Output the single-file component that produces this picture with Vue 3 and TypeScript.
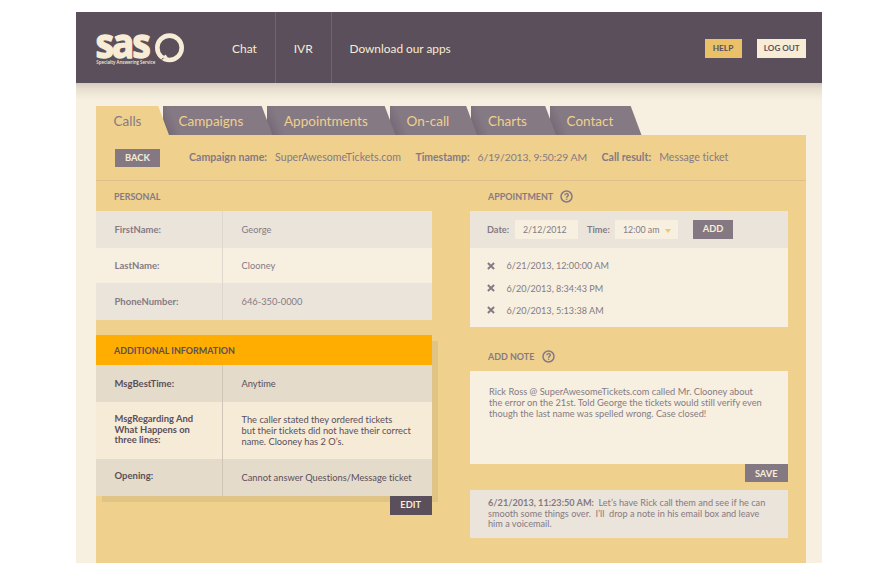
<script setup lang="ts">
interface Field {
  label: string
  value: string
}

const navItems = ['Chat', 'IVR', 'Download our apps']

const tabs = [
  { name: 'Calls', key: 'calls' },
  { name: 'Campaigns', key: 'campaigns' },
  { name: 'Appointments', key: 'appointments' },
  { name: 'On-call', key: 'oncall' },
  { name: 'Charts', key: 'charts' },
  { name: 'Contact', key: 'contact' },
]

const personal: Field[] = [
  { label: 'FirstName:', value: 'George' },
  { label: 'LastName:', value: 'Clooney' },
  { label: 'PhoneNumber:', value: '646-350-0000' },
]

const additional: Field[] = [
  { label: 'MsgBestTime:', value: 'Anytime' },
  {
    label: 'MsgRegarding And\nWhat Happens on\nthree lines:',
    value:
      'The caller stated they ordered tickets\nbut their tickets did not have their correct\nname. Clooney has 2 O’s.',
  },
  { label: 'Opening:', value: 'Cannot answer Questions/Message ticket' },
]

const appointments = ['6/21/2013, 12:00:00 AM', '6/20/2013, 8:34:43 PM', '6/20/2013, 5:13:38 AM']

const draft =
  'Rick Ross @ SuperAwesomeTickets.com called Mr. Clooney about\nthe error on the 21st. Told George the tickets would still verify even\nthough the last name was spelled wrong. Case closed!'

const savedNote =
  'Let’s have Rick call them and see if he can\nsmooth some things over.  I’ll  drop a note in his email box and leave\nhim a voicemail.'
</script>

<template>
  <div class="page">
    <header class="header">
      <svg class="logo" width="92" height="36" viewBox="0 0 92 36">
        <g transform="translate(-0.5 27) scale(0.87 0.97)">
          <text class="logo-word" x="0" y="0">sas</text>
        </g>
        <text class="logo-tag" x="0.3" y="33" textLength="59" lengthAdjust="spacingAndGlyphs">Specialty Answering Service</text>
        <circle cx="73.5" cy="16.8" r="12.2" />
        <path class="logo-cut" d="M64.4 30.4 L67 27 L69.4 26.6" />
        <path class="logo-tail" d="M66.8 26 L69.6 23.6 L71.8 26.6 L68.4 27.4 Z" />
      </svg>
      <nav class="nav">
        <a v-for="item in navItems" :key="item" class="nav-item">{{ item }}</a>
      </nav>
      <div class="actions">
        <button class="top-btn help">HELP</button>
        <button class="top-btn logout">LOG OUT</button>
      </div>
    </header>

    <main class="main">
      <div class="tabs">
        <a v-for="tab in tabs" :key="tab.key" class="tab" :class="tab.key">{{ tab.name }}</a>
      </div>

      <section class="panel">
        <div class="summary">
          <button class="btn back">BACK</button>
          <span class="meta campaign"><b>Campaign name:</b><span>SuperAwesomeTickets.com</span></span>
          <span class="meta stamp"><b>Timestamp:</b><span>6/19/2013, 9:50:29 AM</span></span>
          <span class="meta result"><b>Call result:</b><span>Message ticket</span></span>
        </div>

        <div class="columns">
          <div class="left">
            <h2 class="title">PERSONAL</h2>
            <dl class="table">
              <div v-for="f in personal" :key="f.label" class="row">
                <dt>{{ f.label }}</dt>
                <dd>{{ f.value }}</dd>
              </div>
            </dl>

            <div class="extra">
              <h2 class="title extra-title">ADDITIONAL INFORMATION</h2>
              <dl class="table">
                <div v-for="f in additional" :key="f.label" class="row">
                  <dt>{{ f.label }}</dt>
                  <dd>{{ f.value }}</dd>
                </div>
              </dl>
            </div>
            <button class="btn edit">EDIT</button>
          </div>

          <div class="right">
            <h2 class="title">
              APPOINTMENT
              <svg class="help-icon" width="13" height="13" viewBox="0 0 13 13">
                <circle cx="6.5" cy="6.5" r="5.5" />
                <path d="M4.8 5.3 C4.8 3.1 8.3 3.1 8.3 5.1 C8.3 6.3 6.6 6.3 6.6 7.7" />
                <path d="M6.6 8.6 V9.8" />
              </svg>
            </h2>
            <div class="card">
              <div class="form">
                <label class="date-label">Date:</label>
                <span class="input">2/12/2012</span>
                <label class="time-label">Time:</label>
                <span class="input">12:00 am<i class="caret"></i></span>
                <button class="btn add">ADD</button>
              </div>
              <ul class="list">
                <li v-for="a in appointments" :key="a">
                  <svg width="8" height="8" viewBox="0 0 8 8"><path d="M0.9 1.1 L7.1 6.9 M7.1 1.1 L0.9 6.9" /></svg>
                  {{ a }}
                </li>
              </ul>
            </div>

            <h2 class="title note-title">
              ADD NOTE
              <svg class="help-icon" width="13" height="13" viewBox="0 0 13 13">
                <circle cx="6.5" cy="6.5" r="5.5" />
                <path d="M4.8 5.3 C4.8 3.1 8.3 3.1 8.3 5.1 C8.3 6.3 6.6 6.3 6.6 7.7" />
                <path d="M6.6 8.6 V9.8" />
              </svg>
            </h2>
            <div class="draft">{{ draft }}</div>
            <button class="btn save">SAVE</button>
            <p class="saved"><b>6/21/2013, 11:23:50 AM:</b>{{ savedNote }}</p>
          </div>
        </div>
      </section>
    </main>
  </div>
</template>

<style>
body {
  background: #fff;
}
</style>

<style scoped>
.page {
  box-sizing: border-box;
  width: 746px;
  height: 551px;
  margin: 12px 0 0 76px;
  overflow: hidden;
  background: #f7f0e0;
  color: #857a84;
  font-family: Lato, sans-serif;
  font-variant-ligatures: none;
  display: flex;
  flex-direction: column;
}
.page * {
  box-sizing: border-box;
}
h2,
p,
dl,
dd,
ul {
  margin: 0;
  padding: 0;
}
button {
  border: 0;
  padding: 0;
  font-family: inherit;
  font-weight: 700;
}

/* header */
.header {
  flex: none;
  height: 71px;
  display: flex;
  align-items: center;
  padding: 0 16px 0 19.5px;
  background: #5b4f5b;
}
.logo {
  flex: none;
  margin-top: 2px;
  overflow: visible;
}
.logo text {
  fill: #f7ecd6;
}
.logo-word {
  font: 700 43px "Open Sans", sans-serif;
  letter-spacing: -2.6px;
  stroke: #f7ecd6;
  stroke-width: 1.4;
  stroke-linejoin: round;
}
.logo-tag {
  font: 600 5.2px "Open Sans", sans-serif;
}
.logo circle {
  fill: none;
  stroke: #f7ecd6;
  stroke-width: 4.6;
}
.logo-cut {
  fill: none;
  stroke: #5b4f5b;
  stroke-width: 0.9;
}
.logo-tail {
  fill: #f7ecd6;
}
.nav {
  height: 100%;
  display: flex;
  align-items: center;
  margin-left: 27px;
}
.nav-item {
  height: 100%;
  padding: 0 18.3px 0 17.5px;
  font-size: 12px;
  line-height: 74px;
  color: #f7ecd6;
  border-right: 1px solid #706471;
}
.nav-item:last-child {
  border-right: 0;
  font-size: 11.85px;
}
.actions {
  margin-left: auto;
  display: flex;
  gap: 15px;
}
.top-btn {
  height: 19px;
  font-size: 8.3px;
  line-height: 19px;
  color: #5b4f5b;
  margin-top: 1px;
}
.help {
  width: 37px;
  background: #eac069;
}
.logout {
  width: 49.5px;
  padding-left: 1px;
  font-size: 8.1px;
  background: #f7ecd6;
}

/* tabs */
.main {
  flex: 1;
  display: flex;
  flex-direction: column;
  padding: 22.5px 16px 0 20px;
  background: linear-gradient(#d6ccbe, #e8dfd0 6px, #f7f0e0 17px);
}
.tabs {
  flex: none;
  display: flex;
  height: 29.5px;
}
.tab {
  position: relative;
  height: 29.5px;
  margin-right: -6px;
  font-size: 13.5px;
  line-height: 30.5px;
  color: #efd08d;
  background: linear-gradient(66deg, #746975 5px, #857a84 17px);
  clip-path: polygon(0 0, calc(100% - 11px) 0, 100% 100%, 0 100%);
}
.calls {
  z-index: 6;
  width: 73px;
  padding-left: 17.5px;
  color: #857a84;
  background: #efd08d;
}
.campaigns {
  z-index: 5;
  width: 109.5px;
  padding-left: 15.5px;
}
.appointments {
  z-index: 4;
  width: 129px;
  padding-left: 17.5px;
}
.oncall {
  z-index: 3;
  width: 87.5px;
  padding-left: 17px;
}
.charts {
  z-index: 2;
  width: 85px;
  padding-left: 17px;
}
.contact {
  z-index: 1;
  width: 91.5px;
  padding-left: 16.5px;
}

/* panel */
.panel {
  flex: 1;
  background: #efd08d;
}
.summary {
  display: flex;
  align-items: center;
  height: 46px;
  padding: 0 0 0 19px;
  border-bottom: 1px solid #dfc08c;
}
.btn {
  display: block;
  height: 18.5px;
  line-height: 18.5px;
  font-size: 9.3px;
  color: #f7ecd6;
  background: #847983;
}
.back {
  width: 45px;
  margin: 1px 29px 0 0;
}
.meta {
  display: flex;
  margin-bottom: 1.5px;
  font-size: 10.6px;
  white-space: nowrap;
}
.meta b {
  margin-right: 8px;
}
.campaign {
  width: 226.5px;
}
.stamp {
  width: 186px;
  font-size: 10.4px;
}
.stamp span {
  letter-spacing: -0.07px;
}
.columns {
  display: flex;
  justify-content: space-between;
  padding-right: 18.5px;
}
.left {
  width: 336px;
}
.right {
  width: 317.5px;
}
.title {
  display: flex;
  align-items: center;
  height: 30px;
  padding: 1px 0 0 18px;
  font-size: 8.95px;
  font-weight: 700;
}

/* field tables */
.row {
  display: flex;
  height: 37px;
  background: #ebe4da;
}
.row:nth-child(2) {
  height: 35px;
  background: #f7f0e0;
}
.row dt {
  width: 127px;
  padding-left: 18.5px;
  font-size: 9.5px;
  font-weight: 700;
  line-height: 37px;
  border-right: 1px solid #dfd7cd;
}
.row dd {
  padding-left: 18.5px;
  font-size: 9.3px;
  line-height: 37px;
  white-space: pre;
}
.row:nth-child(2) dt,
.row:nth-child(2) dd {
  line-height: 35px;
}
.extra {
  margin-top: 15px;
  box-shadow: 6px 6px 0 #e0c486;
  color: #5b4f5b;
}
.extra-title {
  height: 29.5px;
  padding-top: 2px;
  background: #ffad00;
}
.extra .row {
  height: 37.5px;
  background: #e4dbca;
}
.extra .row dt {
  border-color: #d0c6b8;
  line-height: 38px;
}
.extra .row dd {
  line-height: 38px;
}
.extra .row:nth-child(2) {
  height: 56.5px;
  background: #f5ebd7;
}
.extra .row:nth-child(2) dt {
  padding-top: 12px;
  line-height: 10.5px;
  font-size: 9.4px;
  white-space: pre;
}
.extra .row:nth-child(2) dd {
  padding-top: 12px;
  line-height: 11.2px;
}
.extra .row:nth-child(3) dt {
  line-height: 33.5px;
}
.edit {
  position: relative;
  width: 42.5px;
  margin-left: auto;
  background: #5b4f5b;
}

/* appointment */
.help-icon {
  margin-left: 7px;
  fill: none;
  stroke: #857a84;
  stroke-width: 1.5;
}
.card {
  height: 115.5px;
  background: #f7f0e0;
}
.form {
  display: flex;
  align-items: center;
  height: 37px;
  padding-left: 17px;
  background: #ebe4da;
  font-size: 9.2px;
}
.form label {
  font-weight: 700;
}
.date-label {
  width: 28px;
}
.time-label {
  width: 28px;
  margin-left: 9px;
}
.input {
  display: flex;
  align-items: center;
  width: 63px;
  height: 19px;
  padding-left: 8px;
  background: #f7f0e0;
  font-size: 8.8px;
}
.caret {
  margin: 2px 0 0 6px;
  border: 3px solid transparent;
  border-top: 4px solid #efc76f;
  border-bottom: 0;
}
.add {
  width: 40px;
  margin-left: 15px;
}
.list {
  list-style: none;
  padding: 6.5px 0 0 17px;
}
.list li {
  display: flex;
  align-items: center;
  gap: 11.5px;
  height: 22.4px;
  font-size: 9.1px;
}
.list path {
  stroke: #857a84;
  stroke-width: 2;
}

/* notes */
.note-title {
  height: 44.5px;
  padding-top: 16px;
}
.note-title .help-icon {
  margin-left: 8px;
}
.draft {
  height: 92.5px;
  padding: 14.5px 0 0 19px;
  background: #f7f0e0;
  font-size: 9.25px;
  line-height: 11.2px;
  white-space: pre;
}
.save {
  width: 42.5px;
  margin-left: auto;
  line-height: 19.5px;
}
.saved {
  height: 48px;
  margin-top: 7.5px;
  padding: 8.5px 0 0 18px;
  background: #ebe4da;
  font-size: 9.17px;
  line-height: 10.5px;
  white-space: pre;
}
.saved b {
  margin-right: 4.5px;
}
</style>
